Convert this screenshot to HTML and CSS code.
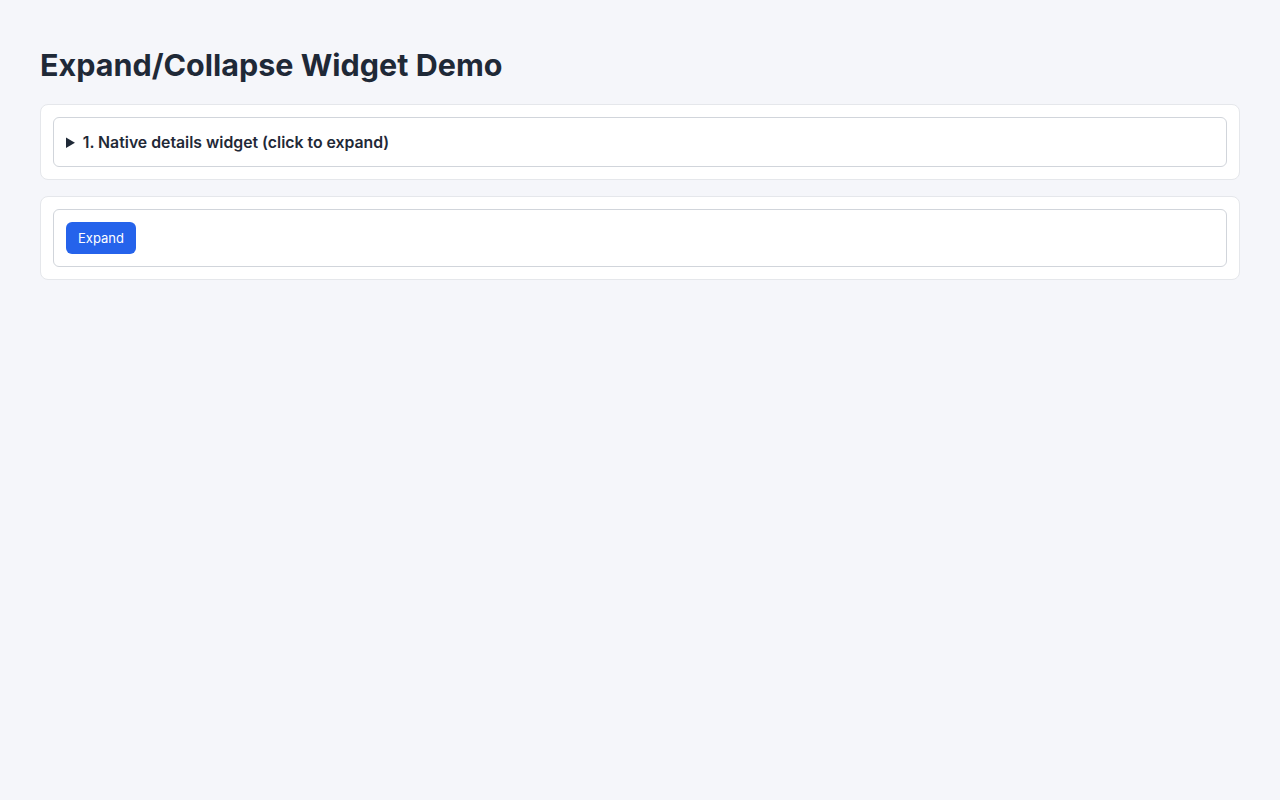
FILE: index.html
```html
<!DOCTYPE html>
<html lang="en">
<head>
    <meta charset="UTF-8">
    <meta name="viewport" content="width=device-width, initial-scale=1.0">
    <title>Expand/Collapse Widget Demo</title>
    <link rel="stylesheet" href="styles.css">
</head>
<body>
    <h1>Expand/Collapse Widget Demo</h1>

    <!-- Native details -->
    <div class="card">
        <details class="panel">
            <summary>1. Native details widget (click to expand)</summary>
            <p>This content is revealed by the browser's own details element.</p>
        </details>
    </div>

    <!-- Button driven -->
    <div class="card">
        <div class="panel">
            <button id="toggle-btn" class="toggle">Expand</button>
            <div id="toggle-content" class="toggle-content">
                <p>This content is shown and hidden with a button.</p>
            </div>
        </div>
    </div>

    <script>
        const toggleBtn = document.getElementById('toggle-btn');
        const toggleContent = document.getElementById('toggle-content');

        toggleBtn.addEventListener('click', () => {
            const open = toggleContent.classList.toggle('open');
            toggleBtn.textContent = open ? 'Collapse' : 'Expand';
        });
    </script>
</body>
</html>
```

FILE: styles.css
```css
body {
    margin: 0;
    padding: 40px;
    background-color: #f5f6fa;
    color: #1f2937;
    font-family: 'Inter', 'Noto Sans', sans-serif;
}

h1 {
    font-size: 30.5px;
    font-weight: 700;
    line-height: 40px;
    margin: 5px 0 19px;
}

.card {
    background-color: #fff;
    border: 1px solid #e5e7eb;
    border-radius: 8px;
    padding: 12px;
    margin-bottom: 16px;
}

.panel {
    border: 1px solid #d1d5db;
    border-radius: 6px;
    padding: 12px;
}

summary {
    font-size: 15.8px;
    font-weight: 600;
    line-height: 24px;
    padding-top: 1px;
    margin-bottom: -1px;
    cursor: pointer;
}

details p,
.toggle-content p {
    margin: 12px 0 0;
    font-size: 14px;
}

.toggle {
    font-family: inherit;
    font-size: 13px;
    line-height: 20px;
    padding: 6px 12px;
    border: none;
    border-radius: 6px;
    background-color: #2563eb;
    color: #fff;
    cursor: pointer;
    display: block;
}

.toggle:hover { background-color: #1d4ed8; }

.toggle-content { display: none; }
.toggle-content.open { display: block; }
```
